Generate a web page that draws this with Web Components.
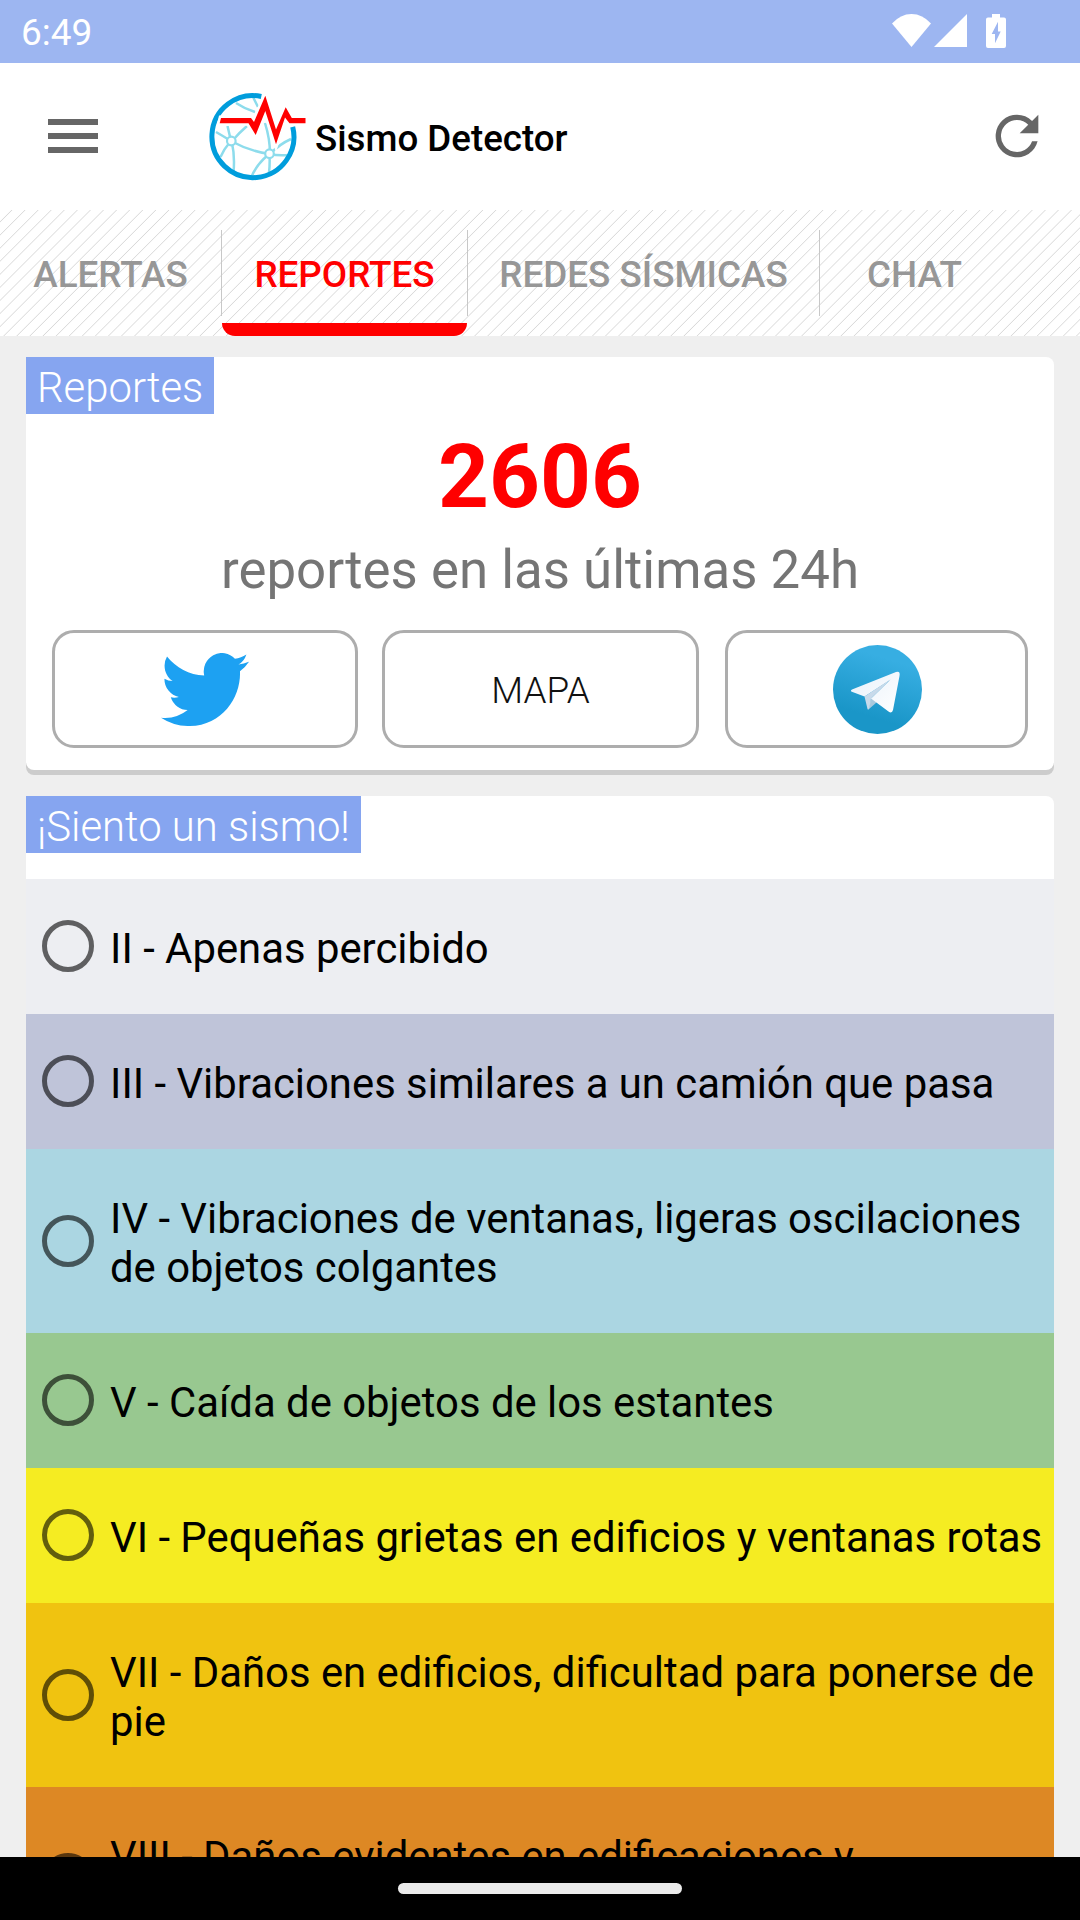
<!DOCTYPE html>
<html lang="es">
<head>
<meta charset="utf-8">
<title>Sismo Detector</title>
<style>
html,body{margin:0;height:1920px;overflow:hidden}
body{font-family:Roboto,"Noto Sans",sans-serif;background:#efefef;color:#000}
</style>
</head>
<body>
<sismo-app></sismo-app>
<script>
const define = (name, html) => customElements.define(name, class extends HTMLElement {
  constructor() {
    super();
    const t = document.createElement('template');
    t.innerHTML = html;
    this.attachShadow({mode: 'open'}).append(t.content.cloneNode(true));
  }
});

define('status-bar', `
<style>
:host{display:flex;height:63px;box-sizing:border-box;background:#9db6f1;color:#fff;padding:0 74px 0 21px;justify-content:space-between}
span{font-size:37px;line-height:44px;padding-top:11px}
div{display:flex;padding-top:14px}
svg{display:block;fill:#fff}
</style>
<span>6:49</span>
<div>
<svg width="39" height="34" viewBox="0 0 39 34"><path d="M0 9.500Q8.500 0 19.500 0T39 9.500L19.500 33Z"/></svg>
<svg width="33" height="34" viewBox="0 0 33 34" style="margin:0 19px 0 3px"><path d="M33 0V33H0Z"/></svg>
<svg width="20" height="34" viewBox="0 0 20 34"><path fill-rule="evenodd" d="M6 0h8v3.500h4a2 2 0 0 1 2 2V32a2 2 0 0 1-2 2H2a2 2 0 0 1-2-2V5.500a2 2 0 0 1 2-2h4ZM12 7.700L5.700 20H9V29.300L14.700 17.500H12Z"/></svg>
</div>`);

define('sismo-logo', `
<style>:host{display:block}svg{display:block}</style>
<svg width="98" height="90" viewBox="0 0 98 90">
<g fill="none" stroke="#8ddcec" stroke-width="2.500">
<path d="M27 12Q36 18 46 21M44 6L49 16M7 41Q14 45 22 50M18.500 35L22 50M38 35Q30 42 24 49M21 51Q15 58 11.500 66M23 52Q26 65 24.500 82M24 51Q40 60 61 63M56 32Q61 48 61 63M82 48Q71 53 62 62M61 63Q69 65 80 64M60.500 64Q61 73 60 82M59 64Q47 74 42 87"/>
</g>
<g fill="#fff" stroke="#8ddcec" stroke-width="2.200"><circle cx="22.300" cy="50" r="4.300"/><circle cx="60.500" cy="62.700" r="4.300"/></g>
<path d="M52.300 5.500A41 41 0 1 0 83.700 35.800" fill="none" stroke="#009ddc" stroke-width="5"/>
<path d="M12 27H42L45 31L56.300 4.700L67 38.500L76.700 16.300L82.800 27H96.500V32.300H80.500L76 26.500L67 53.300L56.300 20L46.700 44L39.500 32.300H10.700Z" fill="#f00" stroke="#fff" stroke-width="5" paint-order="stroke"/>
</svg>`);

define('app-header', `
<style>
:host{display:flex;height:147px;box-sizing:border-box;background:#fff;padding:0 31px 0 48px;align-items:center}
.menu{display:grid;gap:8.700px;width:50px;padding-bottom:1px}
.menu i{height:5.500px;background:#666}
sismo-logo{margin:0 0 1px 111px}
b{font-weight:500;font-size:36.700px;line-height:44px;margin:4px auto 0 8px}
svg{fill:#666;margin-bottom:2px}
</style>
<div class="menu"><i></i><i></i><i></i></div>
<sismo-logo></sismo-logo>
<b>Sismo Detector</b>
<svg width="64" height="64" viewBox="0 0 24 24"><path d="M17.650 6.350A7.958 7.958 0 0 0 12 4a8 8 0 1 0 7.730 10h-2.080A6 6 0 1 1 12 6c1.660 0 3.140.69 4.220 1.780L13 11h7V4z"/></svg>`);

define('nav-tab', `
<style>
:host{display:flex;flex-direction:column;box-sizing:border-box;align-items:center;color:#979797;font-size:36.800px;font-weight:500;line-height:44px;white-space:nowrap;padding-top:43px;height:126px}
:host([active]){color:#f00}
i{display:none}
:host([active]) i{display:block;align-self:stretch;height:13px;margin-top:26px;background:#f00;border-radius:0 0 13px 13px}
</style><span><slot></slot></span><i></i>`);

define('nav-tabs', `
<style>
:host{display:flex;height:126px;background:repeating-linear-gradient(135deg,#fff 0 7.700px,#dadada 8.500px,#fff 9.250px)}
hr{margin:20px 0 0;border:0;width:1px;height:86px;background:#c8c8c8}
</style>
<nav-tab style="width:221px">ALERTAS</nav-tab><hr>
<nav-tab active style="width:245px">REPORTES</nav-tab><hr>
<nav-tab style="width:351px">REDES SÍSMICAS</nav-tab><hr>
<nav-tab style="width:189px">CHAT</nav-tab>`);

define('info-card', `
<style>
:host{display:block;background:#fff;border-radius:0 8px 8px 8px;margin:0 26px}
h2{margin:0;width:max-content;height:57px;box-sizing:border-box;padding:6px 11px 0;background:#86a5f0;color:#fff;font-size:41.850px;font-weight:300;line-height:49px}
</style>
<h2><slot name="tag"></slot></h2><slot></slot>`);

define('outline-button', `
<style>
:host{display:flex;box-sizing:border-box;height:118px;border:3px solid #adadad;border-radius:22px;align-items:center;justify-content:center;font-size:36.800px;font-weight:300;color:#111}
</style><slot></slot>`);

define('report-summary', `
<style>
:host{display:block;height:356px;text-align:center}
.n{color:#f00;font-weight:700;font-size:88.800px;line-height:104px;padding-top:11px}
.t{color:#757575;font-size:52.800px;line-height:62px;padding-top:10px;height:91px}
.b{display:flex;padding:0 26px}
svg{display:block}
</style>
<div class="n">2606</div>
<div class="t">reportes en las últimas 24h</div>
<div class="b">
<outline-button style="width:306px;margin-right:24px"><svg width="88" height="73" viewBox="0 2.250 24 19.500" preserveAspectRatio="none" fill="#1da1f2"><path d="M23.954 4.569a10 10 0 0 1-2.825.775 4.958 4.958 0 0 0 2.163-2.723c-.951.555-2.005.959-3.127 1.184a4.920 4.920 0 0 0-8.384 4.482C7.691 8.094 4.066 6.130 1.640 3.161a4.822 4.822 0 0 0-.666 2.475c0 1.710.870 3.213 2.188 4.096a4.904 4.904 0 0 1-2.228-.616v.061a4.923 4.923 0 0 0 3.946 4.827 4.996 4.996 0 0 1-2.212.085 4.937 4.937 0 0 0 4.604 3.417 9.868 9.868 0 0 1-6.102 2.105c-.390 0-.779-.023-1.170-.067a13.995 13.995 0 0 0 7.557 2.209c9.054 0 13.999-7.496 13.999-13.986 0-.209 0-.420-.015-.630a9.936 9.936 0 0 0 2.460-2.548l-.047-.020z"/></svg></outline-button>
<outline-button style="width:317px;margin-right:26px"><span style="padding-top:3px">MAPA</span></outline-button>
<outline-button style="width:303px"><svg style="margin-left:2px" width="89" height="89" viewBox="0 0 89 89"><defs><linearGradient id="g" x1=".6" y1=".15" x2=".4" y2=".8"><stop stop-color="#37aee2"/><stop offset="1" stop-color="#1a96c8"/></linearGradient><linearGradient id="w" x1="0" y1="0" x2="1" y2="1"><stop stop-color="#e8f1fa"/><stop offset="1" stop-color="#fff"/></linearGradient></defs><circle cx="44.500" cy="44.500" r="44.500" fill="url(#g)"/><path d="M35.500 64.500L44 57L38 52Z" fill="#a9c9dd"/><path d="M19 44.500L63 27Q67.500 25.500 66.500 31L60 65Q59 69 55.500 66.500L38 53.500L57 35L31.500 51.500L19.500 47Q16.500 46 19 44.500Z" fill="url(#w)"/><path d="M38 53.500L58 34L31.500 51.500L34.500 64Q35.500 66 36.500 62Z" fill="#c8daea"/></svg></outline-button>
</div>`);

define('intensity-option', `
<style>
:host{display:flex;box-sizing:border-box;align-items:center;padding:0 0 0 16px;font-size:41.850px;line-height:49px}
i{flex:none;box-sizing:border-box;width:52px;height:52px;margin-bottom:1px;border:5.500px solid rgba(0,0,0,.6);border-radius:50%}
span{padding:45px 0 41px 16px}
</style><i></i><span><slot></slot></span>`);

define('home-bar', `
<style>
:host{display:flex;flex:none;height:63px;background:#000;justify-content:center}
i{width:284px;height:11px;border-radius:6px;background:#ebebeb;margin-top:26px}
</style><i></i>`);

define('sismo-app', `
<style>
:host{display:flex;flex-direction:column;width:1080px;height:1920px;overflow:hidden;background:#efefef}
status-bar,app-header,nav-tabs{flex:none}
main{flex:1;min-height:0;overflow:hidden;padding-top:21px;display:flex;flex-direction:column}
main>*{flex:none}
.first{box-shadow:0 5px #ccc;margin-bottom:26px}
.list{padding-top:26px}
</style>
<status-bar></status-bar><app-header></app-header><nav-tabs></nav-tabs>
<main>
<info-card class="first"><span slot="tag">Reportes</span><report-summary></report-summary></info-card>
<info-card><span slot="tag">¡Siento un sismo!</span>
<div class="list">
<intensity-option style="background:#edeef2">II - Apenas percibido</intensity-option>
<intensity-option style="background:#bfc4d9">III - Vibraciones similares a un camión que pasa</intensity-option>
<intensity-option style="background:#abd6e2">IV - Vibraciones de ventanas, ligeras oscilaciones de objetos colgantes</intensity-option>
<intensity-option style="background:#98c890">V - Caída de objetos de los estantes</intensity-option>
<intensity-option style="background:#f5ec22">VI - Pequeñas grietas en edificios y ventanas rotas</intensity-option>
<intensity-option style="background:#f0c310">VII - Daños en edificios, dificultad para ponerse de pie</intensity-option>
<intensity-option style="background:#dd8824">VIII - Daños evidentes en edificaciones y estructuras</intensity-option>
</div></info-card>
</main>
<home-bar></home-bar>`);
</script>
</body>
</html>
